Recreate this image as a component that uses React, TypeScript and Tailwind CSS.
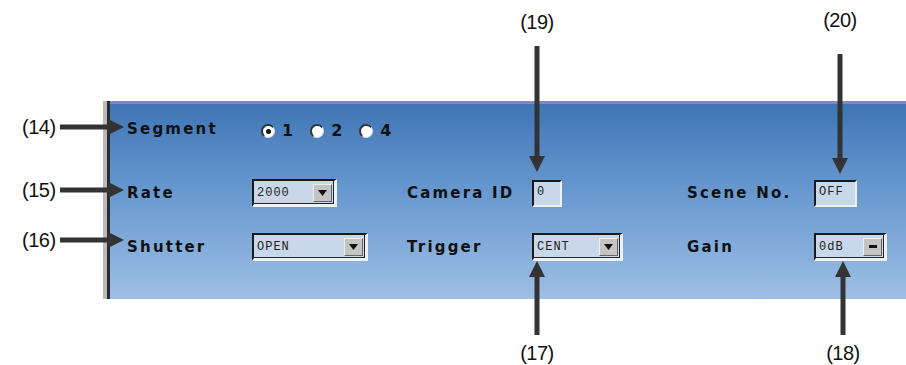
import React from "react";

type Dir = "right" | "down" | "up";

function Arrow({ dir, len }: { dir: Dir; len: number }) {
    // shaft 5px, head 16 wide x 16 long
    if (dir === "right") {
        return (
            <svg width={len} height={16} viewBox={`0 0 ${len} 16`}>
                <rect x={0} y={5.5} width={len - 14} height={5} fill="#333" />
                <polygon points={`${len - 16},0 ${len},8 ${len - 16},16`} fill="#333" />
            </svg>
        );
    }
    if (dir === "down") {
        return (
            <svg width={16} height={len} viewBox={`0 0 16 ${len}`}>
                <rect x={5.5} y={0} width={5} height={len - 14} fill="#333" />
                <polygon points={`0,${len - 16} 8,${len} 16,${len - 16}`} fill="#333" />
            </svg>
        );
    }
    return (
        <svg width={16} height={len} viewBox={`0 0 16 ${len}`}>
            <rect x={5.5} y={14} width={5} height={len - 14} fill="#333" />
            <polygon points="0,16 8,0 16,16" fill="#333" />
        </svg>
    );
}

function Label({ children }: { children: React.ReactNode }) {
    return (
        <span className="text-[15px] font-bold tracking-[2.2px] text-[#111] font-['DejaVu_Sans','Liberation_Sans',sans-serif] leading-none">
            {children}
        </span>
    );
}

function Field({ value, width }: { value: string; width: number }) {
    return (
        <div
            className="h-[27px] flex items-stretch border-t-2 border-l-2 border-t-[#1a1a1a] border-l-[#1a1a1a] border-b-2 border-r-2 border-b-[#eef2f8] border-r-[#eef2f8] bg-[#c9d7ea]"
            style={{ width }}
        >
            <span className="pl-[3px] pt-[4px] text-[12px] leading-none tracking-[1px] text-[#222] font-['Liberation_Mono',monospace]">
                {value}
            </span>
        </div>
    );
}

function Select({ value, width, dash }: { value: string; width: number; dash?: boolean }) {
    return (
        <div
            className="h-[28px] flex items-center justify-between border-t-2 border-l-2 border-t-[#1a1a1a] border-l-[#1a1a1a] border-b-[3px] border-r-[3px] border-b-[#eef2f8] border-r-[#eef2f8] bg-[#c9d7ea] shadow-[inset_-1px_-1px_0_#222]"
            style={{ width }}
        >
            <span className="pl-[3px] text-[12px] leading-none tracking-[1px] text-[#222] font-['Liberation_Mono',monospace]">
                {value}
            </span>
            <div className="mr-[2px] w-[19px] h-[18px] bg-[#c4c4c4] border-t border-l border-t-[#eee] border-l-[#eee] border-b border-r border-b-[#666] border-r-[#666] flex items-center justify-center">
                {dash ? (
                    <div className="w-[8px] h-[3px] bg-[#111]" />
                ) : (
                    <svg width={9} height={6} viewBox="0 0 9 6">
                        <polygon points="0,0 9,0 4.5,6" fill="#111" />
                    </svg>
                )}
            </div>
        </div>
    );
}

function Radio({ checked, label }: { checked?: boolean; label: string }) {
    return (
        <div className="flex items-center gap-[7px]">
            <div className="w-[14px] h-[14px] rounded-full bg-white border-t-2 border-l-2 border-t-[#333] border-l-[#333] border-b border-r border-b-[#ddd] border-r-[#ddd] flex items-center justify-center">
                {checked && <div className="w-[5px] h-[5px] rounded-full bg-[#111]" />}
            </div>
            <span className="text-[16px] font-bold text-[#111] font-['DejaVu_Sans',sans-serif] leading-none">{label}</span>
        </div>
    );
}

function Num({ children }: { children: React.ReactNode }) {
    return (
        <span className="text-[20px] leading-none text-[#111] font-['Liberation_Sans',Arial,sans-serif] tracking-[-0.5px]">
            {children}
        </span>
    );
}

export default function App() {
    return (
        <div className="relative w-[906px] h-[365px] bg-white overflow-hidden">
            {/* panel */}
            <div className="ml-[103px] mt-[101px] h-[198px] flex">
                <div className="w-[4px] bg-[#b9b9b9]" />
                <div className="w-[3px] bg-[#2a2a30]" />
                <div className="flex-1 border-t-[3px] border-t-[#8587c4] bg-gradient-to-b from-[#3f75b6] via-[#6d9cd2] to-[#9ebfe4]">
                    <div className="pl-[17px] grid grid-cols-[125px_155px_125px_155px_127px_1fr]">
                        {/* row 1 */}
                        <div className="h-[30px] mt-[10px] flex items-center">
                            <Label>Segment</Label>
                        </div>
                        <div className="h-[30px] mt-[10px] col-span-5 flex items-center gap-[17px] pl-[9px] pt-[4px]">
                            <Radio checked label="1" />
                            <Radio label="2" />
                            <Radio label="4" />
                        </div>

                        {/* row 2 */}
                        <div className="h-[30px] mt-[34px] flex items-center">
                            <Label>Rate</Label>
                        </div>
                        <div className="h-[30px] mt-[34px] flex items-center">
                            <Select value="2000" width={85} />
                        </div>
                        <div className="h-[30px] mt-[34px] flex items-center">
                            <Label>Camera ID</Label>
                        </div>
                        <div className="h-[30px] mt-[34px] flex items-center">
                            <Field value="0" width={30} />
                        </div>
                        <div className="h-[30px] mt-[34px] flex items-center">
                            <Label>Scene No.</Label>
                        </div>
                        <div className="h-[30px] mt-[34px] flex items-center">
                            <Field value="OFF" width={43} />
                        </div>

                        {/* row 3 */}
                        <div className="h-[30px] mt-[24px] flex items-center">
                            <Label>Shutter</Label>
                        </div>
                        <div className="h-[30px] mt-[24px] flex items-center">
                            <Select value="OPEN" width={116} />
                        </div>
                        <div className="h-[30px] mt-[24px] flex items-center">
                            <Label>Trigger</Label>
                        </div>
                        <div className="h-[30px] mt-[24px] flex items-center">
                            <Select value="CENT" width={91} />
                        </div>
                        <div className="h-[30px] mt-[24px] flex items-center">
                            <Label>Gain</Label>
                        </div>
                        <div className="h-[30px] mt-[24px] flex items-center">
                            <Select value="0dB" width={73} dash />
                        </div>
                    </div>
                </div>
            </div>

            {/* callouts on the left */}
            <div className="absolute left-[22px] top-[117px] flex items-center gap-[4px]">
                <Num>(14)</Num>
                <Arrow dir="right" len={64} />
            </div>
            <div className="absolute left-[22px] top-[180px] flex items-center gap-[4px]">
                <Num>(15)</Num>
                <Arrow dir="right" len={64} />
            </div>
            <div className="absolute left-[22px] top-[230px] flex items-center gap-[4px]">
                <Num>(16)</Num>
                <Arrow dir="right" len={64} />
            </div>

            {/* callouts on top */}
            <div className="absolute left-[517px] top-[12px] w-[40px] flex flex-col items-center gap-[14px]">
                <Num>(19)</Num>
                <Arrow dir="down" len={126} />
            </div>
            <div className="absolute left-[820px] top-[10px] w-[40px] flex flex-col items-center gap-[24px]">
                <Num>(20)</Num>
                <Arrow dir="down" len={120} />
            </div>

            {/* callouts at the bottom */}
            <div className="absolute left-[517px] top-[261px] w-[40px] flex flex-col items-center gap-[8px]">
                <Arrow dir="up" len={74} />
                <Num>(17)</Num>
            </div>
            <div className="absolute left-[823px] top-[261px] w-[40px] flex flex-col items-center gap-[8px]">
                <Arrow dir="up" len={74} />
                <Num>(18)</Num>
            </div>
        </div>
    );
}
